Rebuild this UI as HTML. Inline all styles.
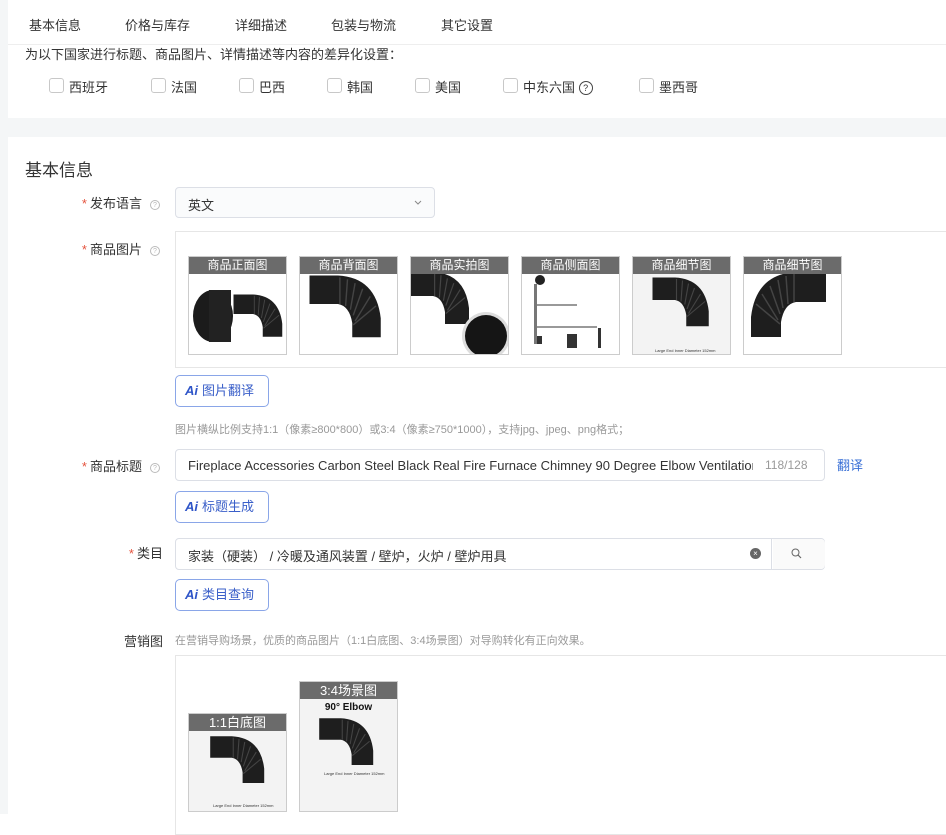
<!DOCTYPE html>
<html><head><meta charset="utf-8">
<style>
*{box-sizing:border-box;margin:0;padding:0}
body{width:946px;height:828px;background:#fff;font-family:"Liberation Sans","Noto Sans CJK SC",sans-serif;font-size:13px;color:#333;position:relative;overflow:hidden}
.a{position:absolute}
.bg{position:absolute;left:0;top:0;width:946px;height:828px;background:#f4f6f7}
.card{position:absolute;background:#fff}
.tab{position:absolute;top:15px;font-size:13px;color:#333}
.cb{position:absolute;top:78px;width:15px;height:15px;border:1px solid #c8c8c8;border-radius:3px;background:#fff}
.cbl{position:absolute;top:77px;font-size:13px;color:#333}
.lbl{position:absolute;font-size:13px;color:#333;text-align:right}
.star{color:#e5533d;margin-right:3px}
.q{display:inline-block;width:10px;height:10px;border:1px solid #bbb;border-radius:50%;font-size:7px;color:#bbb;text-align:center;line-height:9px;margin-left:8px;vertical-align:1px}
.input{position:absolute;border:1px solid #dcdfe6;border-radius:4px;background:#fff}
.tile{position:absolute;width:99px;border:1px solid #ccc;background:#fff;overflow:hidden}
.th{height:17px;background:#6b6b6b;color:#fff;text-align:center;font-size:12px;line-height:17px}
.ai{position:absolute;width:94px;height:32px;border:1px solid #8aa6e8;border-radius:5px;color:#3a5fc9;font-size:13px;line-height:30px;padding-left:9px}
.ai b{font-style:italic;font-weight:900;font-size:13px;margin-right:4px;color:#2f55c8}
.hint{position:absolute;font-size:11px;color:#999}
</style></head><body>
<div class="bg"></div>
<div class="card" style="left:8px;top:0;width:938px;height:118px"></div>
<div class="a" style="left:8px;top:44px;width:938px;height:1px;background:#eee"></div>
<div class="tab" style="left:29px">基本信息</div>
<div class="tab" style="left:125px">价格与库存</div>
<div class="tab" style="left:235px">详细描述</div>
<div class="tab" style="left:331px">包装与物流</div>
<div class="tab" style="left:441px">其它设置</div>
<div class="a" style="left:25px;top:44px;font-size:13px;color:#333">为以下国家进行标题、商品图片、详情描述等内容的差异化设置：</div>
<div class="cb" style="left:49px"></div><div class="cbl" style="left:69px">西班牙</div>
<div class="cb" style="left:151px"></div><div class="cbl" style="left:171px">法国</div>
<div class="cb" style="left:239px"></div><div class="cbl" style="left:259px">巴西</div>
<div class="cb" style="left:327px"></div><div class="cbl" style="left:347px">韩国</div>
<div class="cb" style="left:415px"></div><div class="cbl" style="left:435px">美国</div>
<div class="cb" style="left:503px"></div><div class="cbl" style="left:523px">中东六国 <span style="display:inline-block;width:14px;height:14px;border:1.3px solid #444;border-radius:50%;font-size:9px;text-align:center;line-height:12px;vertical-align:1px">?</span></div>
<div class="cb" style="left:639px"></div><div class="cbl" style="left:659px">墨西哥</div>

<div class="card" style="left:8px;top:137px;width:938px;height:691px"></div>
<div class="a" style="left:0;top:814px;width:946px;height:14px;background:#fff"></div>
<div class="a" style="left:25px;top:156px;font-size:17px;color:#333">基本信息</div>

<div class="lbl" style="left:60px;top:193px;width:100px"><span class="star">*</span>发布语言<span class="q">?</span></div>
<div class="input" style="left:175px;top:187px;width:260px;height:31px;background:#fafbfc"><span class="a" style="left:12px;top:7px">英文</span>
<svg class="a" style="left:238px;top:12px" width="8" height="6"><path d="M1 1 L4 4 L7 1" stroke="#888" fill="none" stroke-width="1"/></svg></div>

<div class="lbl" style="left:60px;top:239px;width:100px"><span class="star">*</span>商品图片<span class="q">?</span></div>
<div class="a" style="left:175px;top:231px;width:780px;height:137px;border:1px solid #e6e6e6"></div>

<svg width="0" height="0" style="position:absolute"><defs>
<g id="el"><path d="M10 10 L40 10 Q80 12 85 55 L85 75 L55 75 L55 60 Q52 42 40 40 L10 40 Z" fill="#1e1e1e"/><path d="M42 12 L42 40 M50 14 L48 42 M58 18 L53 46 M66 24 L56 52 M74 32 L58 58 M80 42 L56 62" stroke="#444" stroke-width="1.5" fill="none"/></g>
</defs></svg>

<div class="tile" style="left:188px;top:256px;height:99px"><div class="th">商品正面图</div>
<svg width="99" height="82"><ellipse cx="24" cy="42" rx="20" ry="26" fill="#1b1b1b"/><rect x="20" y="16" width="22" height="52" fill="#222"/><g transform="translate(38,14) scale(0.65)"><use href="#el"/></g></svg></div>
<div class="tile" style="left:299px;top:256px;height:99px"><div class="th">商品背面图</div>
<svg width="99" height="82"><g transform="translate(0,-8) scale(0.95)"><use href="#el"/></g></svg></div>
<div class="tile" style="left:410px;top:256px;height:99px"><div class="th">商品实拍图</div>
<svg width="99" height="82"><g transform="translate(-10,-10) scale(0.8)"><use href="#el"/></g><circle cx="75" cy="62" r="24" fill="#ddd"/><circle cx="75" cy="62" r="21" fill="#151515"/></svg></div>
<div class="tile" style="left:521px;top:256px;height:99px"><div class="th">商品侧面图</div>
<svg width="99" height="82"><rect x="12" y="10" width="3" height="60" fill="#777"/><rect x="15" y="30" width="40" height="2" fill="#999"/><rect x="15" y="52" width="60" height="2" fill="#999"/><circle cx="18" cy="6" r="5" fill="#222"/><rect x="45" y="60" width="10" height="14" fill="#333"/><rect x="15" y="62" width="5" height="8" fill="#333"/><rect x="76" y="54" width="3" height="20" fill="#333"/></svg></div>
<div class="tile" style="left:632px;top:256px;height:99px;background:#f3f3f3"><div class="th">商品细节图</div>
<svg width="99" height="82"><g transform="translate(12,-4) scale(0.75)"><use href="#el"/></g><text x="22" y="78" font-size="4" fill="#333" font-family="Liberation Sans">Large End Inner Diameter 152mm</text></svg></div>
<div class="tile" style="left:743px;top:256px;height:99px"><div class="th">商品细节图</div>
<svg width="99" height="82"><g transform="translate(92,-12) scale(-1,1) scale(1.0)"><use href="#el"/></g></svg></div>

<div class="ai" style="left:175px;top:375px"><b>Ai</b>图片翻译</div>
<div class="hint" style="left:175px;top:421px">图片横纵比例支持1:1（像素≥800*800）或3:4（像素≥750*1000），支持jpg、jpeg、png格式；</div>

<div class="lbl" style="left:60px;top:456px;width:100px"><span class="star">*</span>商品标题<span class="q">?</span></div>
<div class="input" style="left:175px;top:449px;width:650px;height:32px;overflow:hidden"><span class="a" style="left:12px;top:8px;width:565px;white-space:nowrap;overflow:hidden;font-size:13px">Fireplace Accessories Carbon Steel Black Real Fire Furnace Chimney 90 Degree Elbow Ventilation</span><span class="a" style="left:589px;top:8px;color:#999;font-size:12px">118/128</span></div>
<div class="a" style="left:837px;top:455px;color:#3a70d6;font-size:13px">翻译</div>
<div class="ai" style="left:175px;top:491px"><b>Ai</b>标题生成</div>

<div class="lbl" style="left:60px;top:543px;width:103px"><span class="star">*</span>类目</div>
<div class="input" style="left:175px;top:538px;width:650px;height:32px"><span class="a" style="left:12px;top:7px">家装（硬装） / 冷暖及通风装置 / 壁炉，火炉 / 壁炉用具</span><span class="a" style="left:574px;top:9px;width:11px;height:11px;border-radius:50%;background:#666;color:#fff;font-size:8px;text-align:center;line-height:11px">×</span><span class="a" style="left:595px;top:0;width:1px;height:30px;background:#dcdfe6"></span><span class="a" style="left:597px;top:0;width:52px;height:30px;background:#fafafa;border-radius:0 4px 4px 0"></span>
<svg class="a" style="left:615px;top:9px" width="11" height="11"><circle cx="4.5" cy="4.5" r="3.5" stroke="#666" fill="none" stroke-width="1"/><path d="M7 7 L10 10" stroke="#666" stroke-width="1.2"/></svg></div>
<div class="ai" style="left:175px;top:579px"><b>Ai</b>类目查询</div>

<div class="lbl" style="left:60px;top:631px;width:103px">营销图</div>
<div class="hint" style="left:175px;top:632px">在营销导购场景，优质的商品图片（1:1白底图、3:4场景图）对导购转化有正向效果。</div>
<div class="a" style="left:175px;top:655px;width:780px;height:180px;border:1px solid #e6e6e6"></div>
<div class="tile" style="left:188px;top:713px;height:99px;background:#f3f3f3"><div class="th" style="font-size:13px">1:1白底图</div>
<svg width="99" height="82"><g transform="translate(14,-2) scale(0.72)"><use href="#el"/></g><text x="24" y="76" font-size="4" fill="#333" font-family="Liberation Sans">Large End Inner Diameter 152mm</text></svg></div>
<div class="tile" style="left:299px;top:681px;height:131px;background:#f3f3f3"><div class="th" style="font-size:13px">3:4场景图</div>
<div style="text-align:center;font-weight:bold;font-size:10px;margin-top:3px;color:#111">90° Elbow</div>
<svg width="99" height="100"><g transform="translate(12,-2) scale(0.72)"><use href="#el"/></g><text x="24" y="62" font-size="4" fill="#333" font-family="Liberation Sans">Large End Inner Diameter 152mm</text></svg></div>
</body></html>
